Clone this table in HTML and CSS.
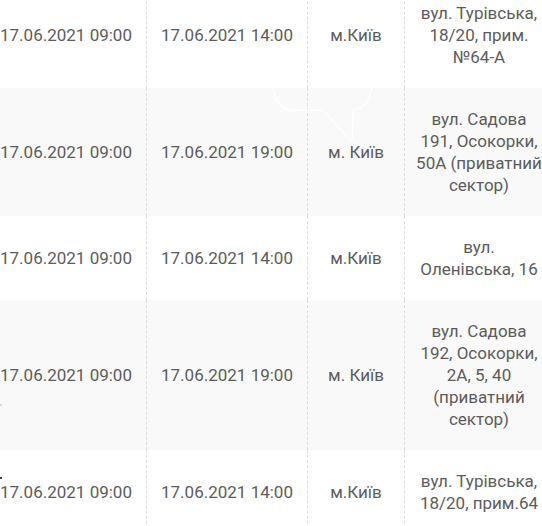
FILE: index.html
```html
<!DOCTYPE html>
<html lang="uk">
<head>
<meta charset="utf-8">
<title>Графік відключень</title>
<link rel="stylesheet" href="styles.css">
</head>
<body>
<div class="viewport">
  <table class="schedule">
    <colgroup>
      <col class="c-start">
      <col class="c-end">
      <col class="c-city">
      <col class="c-addr">
    </colgroup>
    <tbody>
      <tr>
        <td>17.06.2021 09:00</td>
        <td>17.06.2021 14:00</td>
        <td>м.Київ</td>
        <td class="addr">вул. Турівська,<br>18/20, прим.<br>№64-А</td>
      </tr>
      <tr class="alt">
        <td>17.06.2021 09:00</td>
        <td>17.06.2021 19:00</td>
        <td>м. Київ</td>
        <td class="addr">вул. Садова<br>191, Осокорки,<br>50А (приватний<br>сектор)</td>
      </tr>
      <tr>
        <td>17.06.2021 09:00</td>
        <td>17.06.2021 14:00</td>
        <td>м.Київ</td>
        <td class="addr">вул.<br>Оленівська, 16</td>
      </tr>
      <tr class="alt">
        <td>17.06.2021 09:00</td>
        <td>17.06.2021 19:00</td>
        <td>м. Київ</td>
        <td class="addr">вул. Садова<br>192, Осокорки,<br>2А, 5, 40<br>(приватний<br>сектор)</td>
      </tr>
      <tr>
        <td>17.06.2021 09:00</td>
        <td>17.06.2021 14:00</td>
        <td>м.Київ</td>
        <td class="addr">вул. Турівська,<br>18/20, прим.64</td>
      </tr>
    </tbody>
  </table>
  <svg class="watermark" width="120" height="70" viewBox="0 0 120 70" aria-hidden="true">
    <path d="M13 8 C15 20 20 29 31 30 L63 30 L90 60" fill="none" stroke="#ffffff" stroke-width="1.5"/>
    <path d="M112 8 C110 20 105 29 93 30 L92 60" fill="none" stroke="#ffffff" stroke-width="1.5"/>
  </svg>
  <span class="edge-mark edge-mark-light"></span>
  <span class="edge-mark edge-mark-dark"></span>
</div>
</body>
</html>
```

FILE: styles.css
```css
html, body {
  margin: 0;
  padding: 0;
  background: #ffffff;
}

body {
  width: 542px;
  height: 526px;
  overflow: hidden;
}

.viewport {
  position: relative;
  width: 542px;
  height: 526px;
  overflow: hidden;
}

.schedule {
  table-layout: fixed;
  border-collapse: separate;
  border-spacing: 0;
  width: 567px;
  margin-left: -14px;
  margin-top: -18px;
  font-family: Roboto, "Noto Sans", Arial, sans-serif;
  font-size: 17px;
  line-height: 22px;
  color: #5c5c5c;
}

.c-start { width: 160px; }
.c-end { width: 161px; }
.c-city { width: 97px; }
.c-addr { width: 149px; }

.schedule td {
  padding: 20px 12px;
  text-align: center;
  vertical-align: middle;
  border-left: 1px dashed #dddddd;
  white-space: nowrap;
}

.schedule td:first-child {
  border-left: none;
}

.schedule td.addr {
  padding: 20px 6px;
}

.schedule tr.alt td {
  background: #f9f9f9;
}

.watermark {
  position: absolute;
  left: 260px;
  top: 80px;
}

.edge-mark {
  position: absolute;
  left: 0;
  width: 2px;
  height: 2px;
}

.edge-mark-light {
  top: 404px;
  background: #d8d8d8;
}

.edge-mark-dark {
  top: 477px;
  background: #444444;
}
```
